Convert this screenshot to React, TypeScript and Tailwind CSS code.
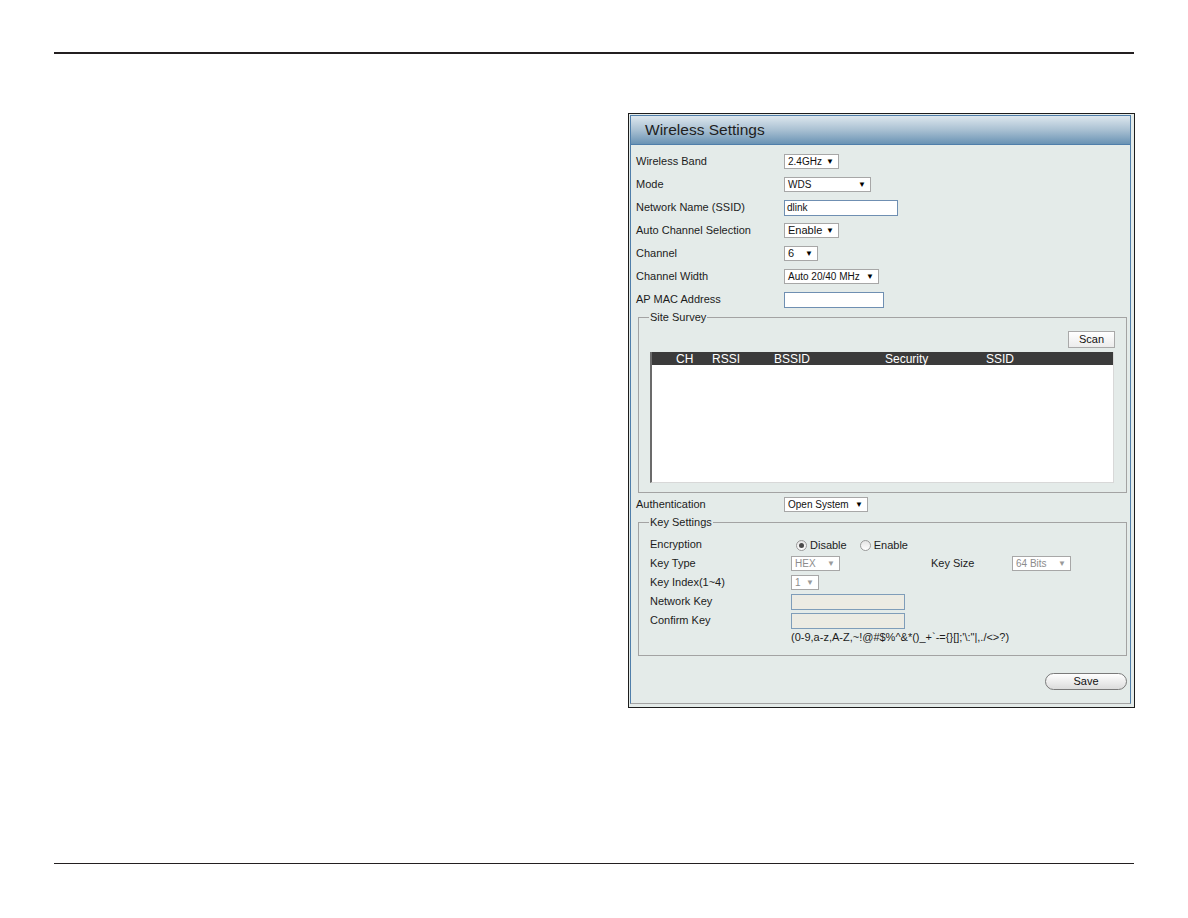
import React from 'react';

// Wireless Settings panel (manual page screenshot)

interface SelectProps {
  value: string;
  className?: string;
  disabled?: boolean;
}

const FakeSelect: React.FC<SelectProps> = ({ value, className = '', disabled = false }) => (
  <div
    className={`flex h-[15px] items-center justify-between border border-[#a7a7a7] bg-white pl-[3px] pr-[4px] text-[10px] leading-none ${
      disabled ? 'text-[#8c8c8c]' : 'text-[#111]'
    } ${className}`}
  >
    <span>{value}</span>
    <span className={`text-[8px] ${disabled ? 'text-[#9a9a9a]' : 'text-black'}`}>▼</span>
  </div>
);

const Row: React.FC<{ label: string; children?: React.ReactNode }> = ({ label, children }) => (
  <div className="flex h-[23px] items-center">
    <div className="w-[148px] text-[11px] text-[#1c1c1c]">{label}</div>
    {children}
  </div>
);

const KeyRow: React.FC<{ label: string; children?: React.ReactNode }> = ({ label, children }) => (
  <div className="flex h-[19px] items-center">
    <div className="w-[141px] text-[11px] text-[#1c1c1c]">{label}</div>
    {children}
  </div>
);

const Radio: React.FC<{ checked?: boolean }> = ({ checked = false }) => (
  <span className="flex h-[11px] w-[11px] items-center justify-center rounded-full border border-[#9a9a9a] bg-gradient-to-b from-[#e4e4e4] to-white">
    {checked && <span className="h-[5px] w-[5px] rounded-full bg-[#4a4a4a]" />}
  </span>
);

export default function App() {
  return (
    <div className="h-[918px] w-[1188px] bg-white pt-[52px] font-['Liberation_Sans',Arial,sans-serif]">
      <div className="mx-[54px] h-[2px] bg-[#231f20]" />

      <div className="mt-[59px] flex justify-end pr-[53px]">
        {/* outer frame */}
        <div className="w-[507px] border border-[#1d1d1d] bg-[#e4ebe9] pb-[3px] pl-px pr-[3px] pt-px">
          <div className="border-x border-t border-b border-x-[#4f7eaa] border-t-[#4f7eaa] border-b-[#a3a3a3] bg-[#e4ebe9]">
            <div className="flex h-[29px] items-center border-b border-[#4f7eaa] bg-gradient-to-b from-[#dde7ee] via-[#a9c0d2] to-[#6a93b4] pl-[14px] text-[15.5px] text-[#1e1e1e]">
              Wireless Settings
            </div>

            <div className="pl-[5px] pt-[5px]">
              <Row label="Wireless Band">
                <FakeSelect value="2.4GHz" className="w-[55px]" />
              </Row>
              <Row label="Mode">
                <FakeSelect value="WDS" className="w-[87px]" />
              </Row>
              <Row label="Network Name (SSID)">
                <div className="flex h-[16px] w-[114px] items-center border border-[#6f8fb2] bg-white pl-[2px] text-[10px] text-[#111]">
                  dlink
                </div>
              </Row>
              <Row label="Auto Channel Selection">
                <FakeSelect value="Enable" className="w-[55px] text-[11px]" />
              </Row>
              <Row label="Channel">
                <FakeSelect value="6" className="w-[34px] text-[11px]" />
              </Row>
              <Row label="Channel Width">
                <FakeSelect value="Auto 20/40 MHz" className="w-[95px]" />
              </Row>
              <Row label="AP MAC Address">
                <div className="h-[16px] w-[100px] border border-[#6f8fb2] bg-white" />
              </Row>
            </div>

            {/* Site Survey */}
            <fieldset className="ml-[7px] w-[489px] border border-[#a3a3a3] px-[11px] pb-[9px]">
              <legend className="ml-[-1px] px-px text-[11px] leading-[13px] text-[#1c1c1c]">Site Survey</legend>
              <div className="flex justify-end pt-[7px]">
                <div className="flex h-[17px] w-[47px] items-center justify-end border border-[#a9a9a9] bg-gradient-to-b from-white to-[#ececec] pr-[10px] text-[11px] text-[#111]">
                  Scan
                </div>
              </div>
              <div className="mt-[4px] h-[131px] w-[464px] border-l-2 border-r border-b border-l-[#6b6b6b] border-r-[#d8d8d8] border-b-[#d8d8d8] bg-white">
                <div className="flex h-[13px] items-center bg-[#3b3b3b] pl-[24px] text-[12px] leading-none text-white">
                  <span className="w-[36px]">CH</span>
                  <span className="w-[62px]">RSSI</span>
                  <span className="w-[111px]">BSSID</span>
                  <span className="w-[101px]">Security</span>
                  <span>SSID</span>
                </div>
              </div>
            </fieldset>

            <div className="pl-[5px]">
              <Row label="Authentication">
                <FakeSelect value="Open System" className="w-[84px]" />
              </Row>
            </div>

            {/* Key Settings */}
            <fieldset className="ml-[7px] w-[489px] border border-[#a3a3a3] px-[11px] pb-[11px]">
              <legend className="ml-[-1px] px-px text-[11px] leading-[13px] text-[#1c1c1c]">Key Settings</legend>
              <div className="pt-[6px]">
                <KeyRow label="Encryption">
                  <div className="ml-[5px] flex items-center pt-[2px] text-[11px] text-[#1c1c1c]">
                    <Radio checked />
                    <span className="ml-[3px]">Disable</span>
                    <span className="ml-[13px]">
                      <Radio />
                    </span>
                    <span className="ml-[3px]">Enable</span>
                  </div>
                </KeyRow>
                <KeyRow label="Key Type">
                  <FakeSelect value="HEX" disabled className="w-[49px]" />
                  <span className="ml-[91px] w-[81px] text-[11px] text-[#1c1c1c]">Key Size</span>
                  <FakeSelect value="64 Bits" disabled className="w-[59px]" />
                </KeyRow>
                <KeyRow label="Key Index(1~4)">
                  <FakeSelect value="1" disabled className="w-[28px]" />
                </KeyRow>
                <KeyRow label="Network Key">
                  <div className="h-[16px] w-[114px] border border-[#7f9db9] bg-[#ecebe3]" />
                </KeyRow>
                <KeyRow label="Confirm Key">
                  <div className="h-[16px] w-[114px] border border-[#7f9db9] bg-[#ecebe3]" />
                </KeyRow>
                <div className="flex h-[14px] items-center pl-[141px] text-[11px] text-[#1c1c1c]">
                  {'(0-9,a-z,A-Z,~!@#$%^&*()_+`-={}[];\'\\:"|,./<>?)'}
                </div>
              </div>
            </fieldset>

            <div className="ml-[7px] flex w-[489px] justify-end pb-[13px] pt-[17px]">
              <div className="flex h-[17px] w-[82px] items-center justify-center rounded-[9px] border border-[#7a7a7a] bg-gradient-to-b from-white to-[#dcdcdc] text-[11px] text-[#111]">
                Save
              </div>
            </div>
          </div>
        </div>
      </div>

      <div className="mx-[54px] mt-[155px] h-px bg-[#231f20]" />
    </div>
  );
}
